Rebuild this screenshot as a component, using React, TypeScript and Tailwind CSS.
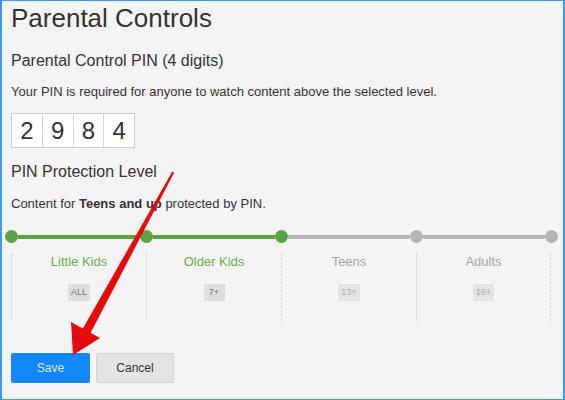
import React from "react";

const levels = [
  { name: "Little Kids", badge: "ALL", active: true },
  { name: "Older Kids", badge: "7+", active: true },
  { name: "Teens", badge: "13+", active: false },
  { name: "Adults", badge: "16+", active: false },
];

export default function App() {
  return (
    <div
      className="relative w-[565px] h-[400px] overflow-hidden bg-[#f3f3f3] border-t border-b border-l-2 border-r-2 border-[#3b99fc] text-[#333]"
      style={{ fontFamily: '"Liberation Sans", Arial, sans-serif' }}
    >
      <div className="ml-[9px] w-[540px]">
        <h1 className="pt-[2px] text-[26px] leading-[30px] text-[#333]">Parental Controls</h1>
        <h2 className="mt-[18px] text-[16px] leading-[20px]">Parental Control PIN (4 digits)</h2>
        <p className="mt-[13px] text-[13px] leading-[16px]">
          Your PIN is required for anyone to watch content above the selected level.
        </p>
        <div className="mt-[13px] flex w-[124px] h-[35px] border border-[#cfcfcf] bg-white">
          {["2", "9", "8", "4"].map((d, i) => (
            <div
              key={i}
              className={`flex-1 flex items-center justify-center text-[24px] text-[#333] ${
                i > 0 ? "border-l border-[#d6d6d6]" : ""
              }`}
            >
              {d}
            </div>
          ))}
        </div>
        <h2 className="mt-[14px] text-[16px] leading-[20px]">PIN Protection Level</h2>
        <p className="mt-[14px] text-[13px] leading-[16px]">
          Content for <b className="font-bold">Teens and up</b> protected by PIN.
        </p>

        <div className="mt-[18px] -mx-[6.5px] flex items-center h-[13px]">
          <div className="w-[13px] h-[13px] rounded-full bg-[#5ca443] shrink-0" />
          <div className="w-[122px] h-[4px] bg-[#5ca443]" />
          <div className="w-[13px] h-[13px] rounded-full bg-[#5ca443] shrink-0" />
          <div className="w-[122px] h-[4px] bg-[#5ca443]" />
          <div className="w-[13px] h-[13px] rounded-full bg-[#5ca443] shrink-0" />
          <div className="w-[122px] h-[4px] bg-[#b5b5b5]" />
          <div className="w-[13px] h-[13px] rounded-full bg-[#b5b5b5] shrink-0" />
          <div className="w-[122px] h-[4px] bg-[#b5b5b5]" />
          <div className="w-[13px] h-[13px] rounded-full bg-[#b5b5b5] shrink-0" />
        </div>

        <div className="mt-[10px] flex h-[69px]">
          {levels.map((l, i) => (
            <div
              key={l.name}
              className={`w-[135px] flex flex-col items-center border-l border-dotted border-[#cccccc] ${
                i === 3 ? "border-r" : ""
              }`}
            >
              <div
                className={`pt-[1px] text-[13px] leading-[16px] ${
                  l.active ? "text-[#6aae4d]" : "text-[#a8a8a8]"
                }`}
              >
                {l.name}
              </div>
              <div
                className={`mt-[14px] h-[17px] min-w-[21px] px-[3px] flex items-center justify-center text-[9px] ${
                  l.active ? "bg-[#dedede] text-[#777]" : "bg-[#e3e3e3] text-[#b0b0b0]"
                }`}
              >
                {l.badge}
              </div>
            </div>
          ))}
        </div>

        <div className="mt-[31px] flex gap-[6px]">
          <button className="w-[79px] h-[30px] rounded-[2px] bg-[#1187f8] text-[#d5eaff] text-[12px]">
            Save
          </button>
          <button className="w-[78px] h-[30px] rounded-[2px] bg-[#e4e4e4] border border-[#d4d4d4] text-[#333] text-[12px]">
            Cancel
          </button>
        </div>
      </div>

      <svg className="absolute left-0 top-0 pointer-events-none" width="565" height="400" viewBox="0 0 565 400">
        <polygon points="170.3,170.6 172.2,171.6 88,333 80,329" fill="#e30b0b" />
        <polygon points="71,354 69,321 98,337" fill="#e30b0b" />
      </svg>
    </div>
  );
}
